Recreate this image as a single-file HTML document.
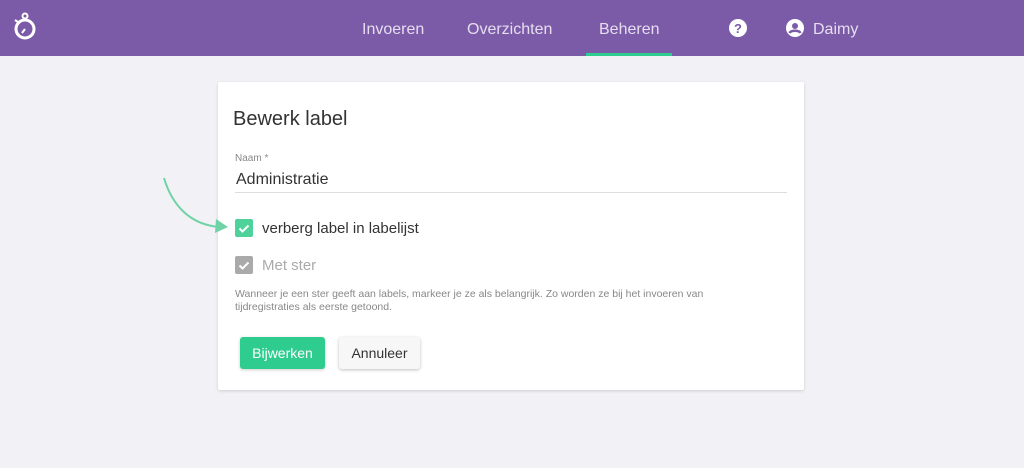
<!DOCTYPE html>
<html><head><style>
*{margin:0;padding:0;box-sizing:border-box}
body{width:1024px;height:468px;background:#f1f1f6;font-family:"Liberation Sans",sans-serif;position:relative;overflow:hidden}
.nav{position:absolute;left:0;top:0;width:1024px;height:56px;background:#7b5ba7}
.nav a{position:absolute;top:21px;color:#e6ddf0;font-size:16px}
.ul{position:absolute;left:586px;top:53px;width:86px;height:3px;background:#2ecc8f}
.card{position:absolute;left:218px;top:82px;width:586px;height:308px;background:#fff;box-shadow:0 1px 3px rgba(0,0,0,.15);border-radius:2px}
.t{position:absolute;color:#333}
.cb{position:absolute;width:18px;height:18px;border-radius:2px}
.btn{position:absolute;height:32px;border-radius:3px;font-size:14px;text-align:center;line-height:32px}
</style></head><body>
<div class="nav">
<svg style="position:absolute;left:12px;top:11px" width="26" height="32" viewBox="0 0 26 32"><circle cx="13" cy="18" r="9" fill="none" stroke="#fff" stroke-width="3"/><circle cx="13" cy="5" r="2.5" fill="none" stroke="#fff" stroke-width="2"/><line x1="13" y1="18" x2="10" y2="22" stroke="#fff" stroke-width="2"/><line x1="3" y1="9" x2="6" y2="11" stroke="#fff" stroke-width="2"/></svg>
<a style="left:362px">Invoeren</a><a style="left:467px">Overzichten</a><a style="left:599px">Beheren</a>
<svg style="position:absolute;left:729px;top:19px" width="18" height="18"><circle cx="9" cy="9" r="9" fill="#fff"/><text x="9" y="14" font-size="13" font-weight="bold" text-anchor="middle" fill="#7b5ba7" font-family="Liberation Sans">?</text></svg>
<svg style="position:absolute;left:786px;top:19px" width="18" height="18"><circle cx="9" cy="9" r="9" fill="#fff"/><circle cx="9" cy="7" r="3" fill="#7b5ba7"/><path d="M3.5 14c1.5-3 9.5-3 11 0" stroke="#7b5ba7" stroke-width="2.5" fill="none"/></svg>
<a style="left:813px">Daimy</a>
<div class="ul"></div>
</div>
<div class="card">
<div class="t" style="left:15px;top:26px;font-size:20px">Bewerk label</div>
<div class="t" style="left:17px;top:71px;font-size:10px;color:#888">Naam *</div>
<div class="t" style="left:18px;top:89px;font-size:16px">Administratie</div>
<div style="position:absolute;left:17px;top:110px;width:552px;height:1px;background:#ddd"></div>
<div class="cb" style="left:17px;top:137px;background:#4fd19a"><svg width="18" height="18"><path d="M4.5 9.5l3 3 6-6" stroke="#fff" stroke-width="2" fill="none"/></svg></div>
<div class="t" style="left:44px;top:138px;font-size:15px">verberg label in labelijst</div>
<div class="cb" style="left:17px;top:174px;background:#aaa"><svg width="18" height="18"><path d="M4.5 9.5l3 3 6-6" stroke="#fff" stroke-width="2" fill="none"/></svg></div>
<div class="t" style="left:44px;top:175px;font-size:15px;color:#aaa">Met ster</div>
<div class="t" style="left:17px;top:206px;font-size:10.5px;color:#888;line-height:13px;width:522px">Wanneer je een ster geeft aan labels, markeer je ze als belangrijk. Zo worden ze bij het invoeren van tijdregistraties als eerste getoond.</div>
<div class="btn" style="left:22px;top:255px;width:85px;background:#2ecc8f;color:#fff;box-shadow:0 1px 3px rgba(0,0,0,.2)">Bijwerken</div>
<div class="btn" style="left:121px;top:255px;width:81px;background:#f7f7f7;color:#333;box-shadow:0 1px 3px rgba(0,0,0,.25)">Annuleer</div>
</div>
<svg style="position:absolute;left:160px;top:175px" width="72" height="62"><path d="M4 3C12 30 30 50 60 52" stroke="#6fd3a5" stroke-width="2" fill="none"/><path d="M56 44l12 8-13 6z" fill="#6fd3a5"/></svg>
</body></html>
